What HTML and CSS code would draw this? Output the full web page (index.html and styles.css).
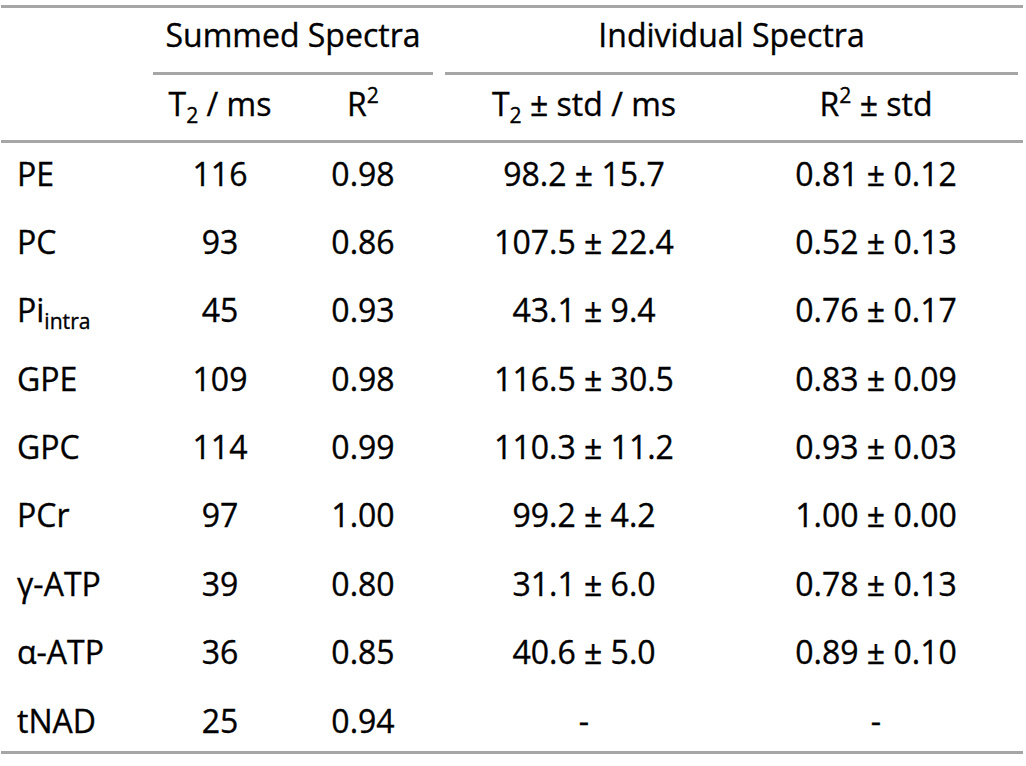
FILE: index.html
```html
<!DOCTYPE html>
<html>
<head>
<meta charset="utf-8">
<link rel="stylesheet" href="styles.css">
</head>
<body>
<div class="table">
  <div class="row head1">
    <div></div>
    <div class="group summed">Summed Spectra</div>
    <div class="group indiv">Individual Spectra</div>
  </div>
  <div class="row head2">
    <div></div>
    <div class="c">T<sub>2</sub> / ms</div>
    <div class="c">R<sup>2</sup></div>
    <div class="c">T<sub>2</sub> ± std / ms</div>
    <div class="c">R<sup>2</sup> ± std</div>
  </div>
  <div class="body">
    <div class="row data"><div class="l">PE</div><div class="c">116</div><div class="c">0.98</div><div class="c">98.2 ± 15.7</div><div class="c">0.81 ± 0.12</div></div>
    <div class="row data"><div class="l">PC</div><div class="c">93</div><div class="c">0.86</div><div class="c">107.5 ± 22.4</div><div class="c">0.52 ± 0.13</div></div>
    <div class="row data"><div class="l">Pi<sub>intra</sub></div><div class="c">45</div><div class="c">0.93</div><div class="c">43.1 ± 9.4</div><div class="c">0.76 ± 0.17</div></div>
    <div class="row data"><div class="l">GPE</div><div class="c">109</div><div class="c">0.98</div><div class="c">116.5 ± 30.5</div><div class="c">0.83 ± 0.09</div></div>
    <div class="row data"><div class="l">GPC</div><div class="c">114</div><div class="c">0.99</div><div class="c">110.3 ± 11.2</div><div class="c">0.93 ± 0.03</div></div>
    <div class="row data"><div class="l">PCr</div><div class="c">97</div><div class="c">1.00</div><div class="c">99.2 ± 4.2</div><div class="c">1.00 ± 0.00</div></div>
    <div class="row data"><div class="l">γ-ATP</div><div class="c">39</div><div class="c">0.80</div><div class="c">31.1 ± 6.0</div><div class="c">0.78 ± 0.13</div></div>
    <div class="row data"><div class="l">α-ATP</div><div class="c">36</div><div class="c">0.85</div><div class="c">40.6 ± 5.0</div><div class="c">0.89 ± 0.10</div></div>
    <div class="row data"><div class="l">tNAD</div><div class="c">25</div><div class="c">0.94</div><div class="c">-</div><div class="c">-</div></div>
  </div>
</div>
</body>
</html>
```
FILE: styles.css
```css
html, body {
  margin: 0;
  padding: 0;
  background: #ffffff;
}
body {
  font-family: "Open Sans", "Noto Sans", sans-serif;
  font-size: 32px;
  color: #000000;
  -webkit-text-stroke: 0.35px #000000;
}
.table {
  margin: 5px 0 0 1px;
  width: 1022px;
  border-top: 3px solid #a6a6a6;
  border-bottom: 3px solid #a6a6a6;
}
.row {
  display: grid;
  grid-template-columns: 152px 134px 152px 290px 1fr;
  align-items: center;
}
.head1 {
  height: 67px;
  align-items: stretch;
}
.group {
  border-bottom: 3px solid #a6a6a6;
  display: flex;
  align-items: center;
  justify-content: center;
  padding-bottom: 12px;
}
.summed {
  grid-column: 2 / 4;
  margin-right: 6px;
}
.indiv {
  grid-column: 4 / 6;
  margin-left: 6px;
  margin-right: 5px;
}
.head2 {
  border-bottom: 3px solid #a6a6a6;
  padding-bottom: 8px;
  box-sizing: border-box;
  height: 68px;
}
.body {
  display: flex;
  flex-direction: column;
  gap: 10.4px;
  padding: 1px 0 2px 0;
}
.data {
  height: 58px;
}
.c {
  text-align: center;
  white-space: nowrap;
}
.l {
  padding-left: 16px;
  white-space: nowrap;
}
sub, sup {
  font-size: 0.66em;
  line-height: 0;
}
sub {
  vertical-align: -0.35em;
}
sup {
  vertical-align: 0.6em;
}
```
